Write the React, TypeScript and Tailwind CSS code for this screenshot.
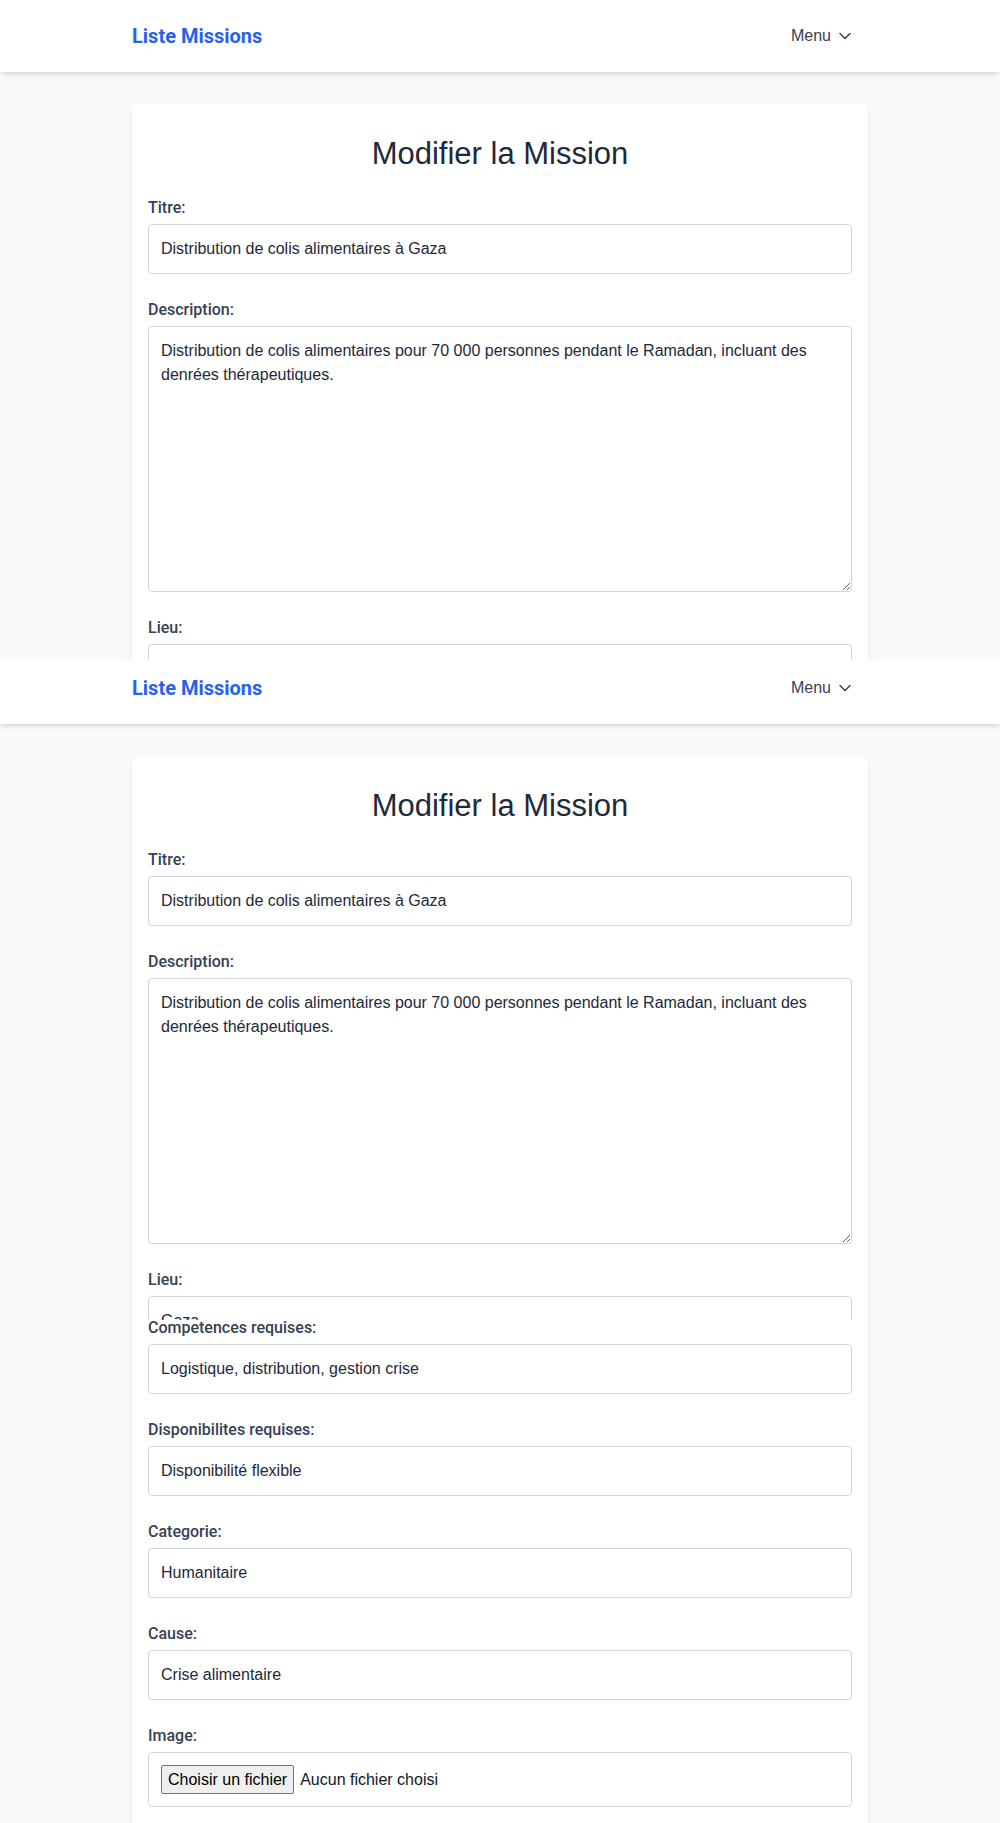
import { ChevronDown } from 'lucide-react';

const champs = [
  { label: 'Titre:', value: 'Distribution de colis alimentaires à Gaza' },
  {
    label: 'Description:',
    value:
      'Distribution de colis alimentaires pour 70 000 personnes pendant le Ramadan, incluant des denrées thérapeutiques.',
    textarea: true
  },
  { label: 'Lieu:', value: 'Gaza' },
  { label: 'Competences requises:', value: 'Logistique, distribution, gestion crise' },
  { label: 'Disponibilites requises:', value: 'Disponibilité flexible' },
  { label: 'Categorie:', value: 'Humanitaire' },
  { label: 'Cause:', value: 'Crise alimentaire' }
];

function Navbar() {
  return (
    <nav className="bg-white shadow-md">
      <div className="mx-auto flex h-[72px] w-[736px] items-center justify-between pr-[13px]">
        <a href="#" className="font-['Roboto',sans-serif] text-xl font-bold text-[#2563eb]">
          Liste Missions
        </a>
        <button className="flex items-center gap-1 text-base text-gray-700">
          Menu
          <ChevronDown size={20} strokeWidth={1.75} />
        </button>
      </div>
    </nav>
  );
}

function Page() {
  return (
    <div className="bg-gray-50">
      <Navbar />
      <main className="py-8">
        <div className="mx-auto w-[736px] rounded-lg bg-white px-4 pt-8 pb-8 shadow-md">
          <h1 className="mb-6 text-center text-[31px] leading-9 text-gray-800">Modifier la Mission</h1>
          <form>
            {champs.map((champ, index) => (
              <div key={index} className="mb-6">
                <label className="mb-1 block font-['Roboto',sans-serif] text-base font-medium text-gray-700">
                  {champ.label}
                </label>
                {champ.textarea ? (
                  <textarea
                    rows={10}
                    defaultValue={champ.value}
                    className="block w-full rounded border border-gray-300 px-3 py-3 text-base leading-6 text-gray-800"
                  />
                ) : (
                  <input
                    type="text"
                    defaultValue={champ.value}
                    className="block w-full rounded border border-gray-300 px-3 py-3 text-base leading-6 text-gray-800"
                  />
                )}
              </div>
            ))}
            <div className="mb-6">
              <label className="mb-1 block font-['Roboto',sans-serif] text-base font-medium text-gray-700">
                Image:
              </label>
              <div className="flex items-center rounded border border-gray-300 px-3 py-3 text-base leading-6 text-gray-900">
                <span className="flex h-[29px] items-center rounded-[2px] border border-[#767676] bg-[#efefef] px-1.5 text-black">
                  Choisir un fichier
                </span>
                <span className="ml-1.5">Aucun fichier choisi</span>
              </div>
            </div>
            <button type="button" className="w-full rounded bg-[#2563eb] py-3 font-semibold text-white">
              Mettre à jour
            </button>
          </form>
        </div>
      </main>
    </div>
  );
}

export default function App() {
  return (
    <div className="font-['Liberation_Sans',Arial,sans-serif]">
      <div className="h-[660px] overflow-hidden">
        <Page />
      </div>
      <div className="h-[660px] overflow-hidden">
        <div className="-mt-2">
          <Page />
        </div>
      </div>
      <div className="h-[503px] overflow-hidden">
        <div className="-mt-[722px]">
          <Page />
        </div>
      </div>
    </div>
  );
}
